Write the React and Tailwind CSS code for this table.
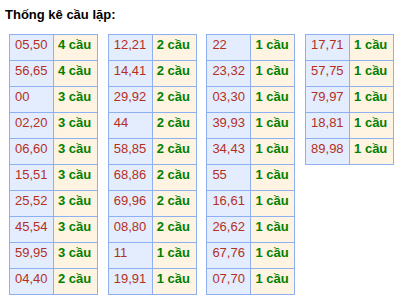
const tables = [
    [
        ["05,50", 4], ["56,65", 4], ["00", 3], ["02,20", 3], ["06,60", 3],
        ["15,51", 3], ["25,52", 3], ["45,54", 3], ["59,95", 3], ["04,40", 2],
    ],
    [
        ["12,21", 2], ["14,41", 2], ["29,92", 2], ["44", 2], ["58,85", 2],
        ["68,86", 2], ["69,96", 2], ["08,80", 2], ["11", 1], ["19,91", 1],
    ],
    [
        ["22", 1], ["23,32", 1], ["03,30", 1], ["39,93", 1], ["34,43", 1],
        ["55", 1], ["16,61", 1], ["26,62", 1], ["67,76", 1], ["07,70", 1],
    ],
    [
        ["17,71", 1], ["57,75", 1], ["79,97", 1], ["18,81", 1], ["89,98", 1],
    ],
];

const App = () => {
    return (
        <div className="w-[417px] h-[298px] bg-white overflow-hidden font-['Liberation_Sans',Arial,sans-serif]">
            <div className="pl-[5px] pt-[7px] text-[13px] leading-[16px] font-bold text-black">
                Thống kê cầu lặp:
            </div>

            {/* các bảng cầu */}
            <div className="flex items-start gap-[9.7px] ml-[9px] mt-[11px]">
                {tables.map((rows, t) => (
                    <div key={t} className="w-[89px] border-l border-t border-[#8eb0ee]">
                        {rows.map(([pair, count], i) => (
                            <div key={i} className="flex">
                                <div className="w-[44px] h-[26px] pl-[5px] pt-[2px] text-[13px] leading-[16px] text-[#b3301f] bg-[#e3edfd] border-r border-b border-[#8eb0ee]">
                                    {pair}
                                </div>
                                <div className="w-[44px] h-[26px] pl-[4px] pt-[2px] text-[13px] leading-[16px] font-bold text-[#008000] bg-[#fff3e1] border-r border-b border-[#8eb0ee]">
                                    {count} cầu
                                </div>
                            </div>
                        ))}
                    </div>
                ))}
            </div>
        </div>
    );
};

export default App;
